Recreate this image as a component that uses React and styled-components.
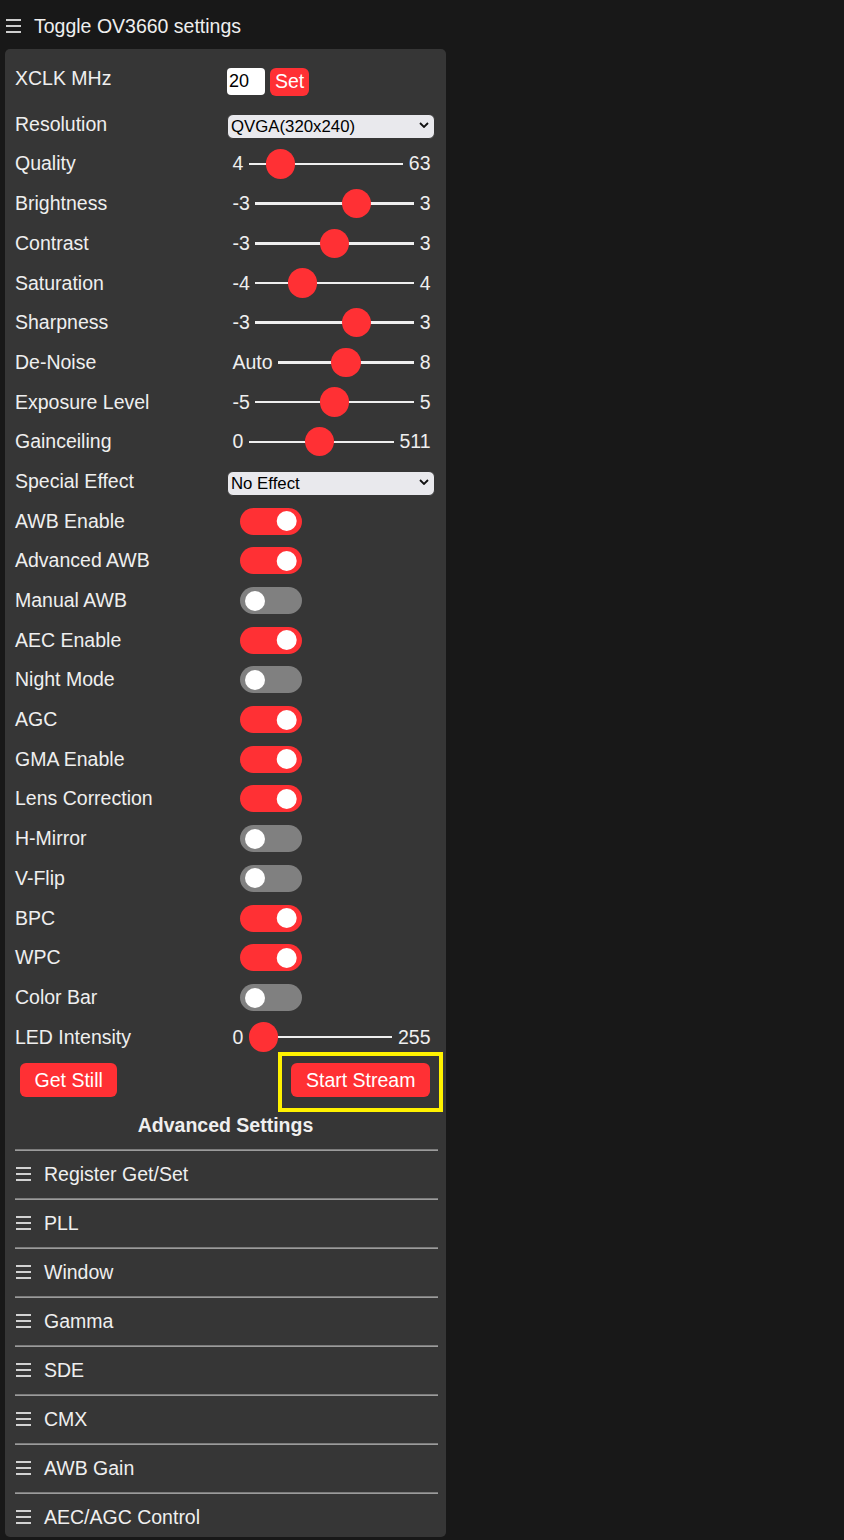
import styled, { createGlobalStyle } from 'styled-components'

const GlobalStyle = createGlobalStyle`
  html, body {
    margin: 0;
    padding: 0;
    background: #181818;
  }
  body {
    font-family: "Liberation Sans", Arial, Helvetica, sans-serif;
    font-size: 19.5px;
    color: #efefef;
    overflow: hidden;
  }
`

const Page = styled.div`
  min-height: 1540px;
`

const NavToggle = styled.label`
  display: flex;
  align-items: center;
  gap: 13px;
  height: 28px;
  line-height: 28px;
  padding: 12px 0 0 6px;
  margin-bottom: 9px;
  cursor: pointer;
`

const Menu = styled.nav`
  display: flex;
  flex-direction: column;
  width: 421px;
  margin-left: 5px;
  padding: 10px 10px 6px;
  background: #363636;
  border-radius: 5px;
`

const Group = styled.div`
  display: flex;
  flex-wrap: nowrap;
  line-height: 27px;
  margin: 6.35px 0;
`

const Label = styled.label`
  flex: 0 0 212px;
`

const TextInput = styled.input`
  box-sizing: border-box;
  width: 38px;
  height: 27px;
  margin: 3px 0 0;
  padding: 0 2px;
  border: 0;
  border-radius: 4px;
  background: #fff;
  color: #000;
  font-family: "Liberation Sans", Arial, sans-serif;
  font-size: 18px;
  outline: 0;
`

const InlineButton = styled.button`
  margin: 2.4px 2.4px 2.4px 5px;
  padding: 1.2px 4.9px 2.4px;
  border: 0;
  border-radius: 6px;
  background: #ff3034;
  color: #fff;
  font-family: "Liberation Sans", Arial, sans-serif;
  font-size: 19.5px;
  line-height: 24.4px;
  cursor: pointer;
`

const RangeEnd = styled.span`
  padding: 0 5.5px;
  white-space: nowrap;
`

const Range = styled.input.attrs({ type: 'range' })`
  -webkit-appearance: none;
  appearance: none;
  flex: 1 1 auto;
  min-width: 0;
  height: 27px;
  margin: 0;
  background: transparent;
  cursor: pointer;
  outline: 0;

  &::-webkit-slider-runnable-track {
    height: 2.5px;
    background: #efefef;
    border: 0;
  }
  &::-webkit-slider-thumb {
    -webkit-appearance: none;
    width: 29.3px;
    height: 29.3px;
    margin-top: -13.4px;
    border-radius: 50%;
    background: #ff3034;
    border: 0;
  }
`

const SelectBox = styled.div`
  position: relative;
  align-self: center;
  width: 208px;
  height: 25px;
`

const Select = styled.select`
  -webkit-appearance: none;
  appearance: none;
  box-sizing: border-box;
  width: 100%;
  height: 25px;
  margin: 0;
  padding: 0 0 0 3px;
  border: 1px solid #363636;
  border-radius: 6px;
  background: #e9e9ed;
  color: #000;
  font-family: "Liberation Sans", Arial, sans-serif;
  font-size: 16.8px;
  outline: 0;
`

const Chevron = styled.svg`
  position: absolute;
  right: 6px;
  top: 10px;
  pointer-events: none;
`

const Switch = styled.div`
  position: relative;
  height: 27px;
  margin-left: 13px;
`

const SwitchInput = styled.input.attrs({ type: 'checkbox' })`
  position: absolute;
  opacity: 0;
  width: 0;
  height: 0;
  margin: 0;
`

const SwitchTrack = styled.label`
  position: relative;
  display: block;
  width: 61.5px;
  height: 27px;
  border-radius: 27px;
  background: grey;
  cursor: pointer;

  &::before {
    content: "";
    position: absolute;
    left: 4.9px;
    top: 3.6px;
    width: 20px;
    height: 20px;
    border-radius: 50%;
    background: #fff;
  }

  ${SwitchInput}:checked + & {
    background: #ff3034;
  }
  ${SwitchInput}:checked + &::before {
    transform: translateX(31.7px);
  }
`

const Buttons = styled.section`
  display: flex;
  flex-wrap: nowrap;
  justify-content: space-between;
`

const Button = styled.button`
  position: relative;
  display: block;
  margin: 6px 5px;
  padding: 0 14.6px;
  border: 0;
  border-radius: 6px;
  background: #ff3034;
  color: #fff;
  font-family: "Liberation Sans", Arial, sans-serif;
  font-size: 19.5px;
  line-height: 34.5px;
  cursor: pointer;

  &:last-child {
    margin-right: 6px;
  }

  ${p => p.$marked && `
    &::after {
      content: "";
      position: absolute;
      left: -13.3px;
      right: -13px;
      top: -11px;
      bottom: -14.3px;
      border: 4px solid #fff200;
      pointer-events: none;
    }
  `}
`

const SectionTitle = styled.div`
  margin-top: 8.5px;
  line-height: 27px;
  text-align: center;
  font-weight: bold;
`

const Rule = styled.hr`
  margin: 10px -2px 10px 0;
  height: 0;
  border: 0;
  border-top: 1px solid #7c7c7c;
  border-bottom: 1px solid #9c9c9c;
`

const SectionLabel = styled.label`
  display: flex;
  align-items: center;
  gap: 13px;
  padding-left: 1px;
  line-height: 27px;
  cursor: pointer;
`

const Burger = () => (
  <svg width="15" height="14" viewBox="0 0 15 14">
    <g stroke="#efefef" strokeWidth="1.7">
      <line x1="0" y1="1" x2="15" y2="1" />
      <line x1="0" y1="7" x2="15" y2="7" />
      <line x1="0" y1="13" x2="15" y2="13" />
    </g>
  </svg>
)

const ranges = [
  { id: 'quality', label: 'Quality', min: 4, max: 63, value: 12 },
  { id: 'brightness', label: 'Brightness', min: -3, max: 3, value: 1 },
  { id: 'contrast', label: 'Contrast', min: -3, max: 3, value: 0 },
  { id: 'saturation', label: 'Saturation', min: -4, max: 4, value: -2 },
  { id: 'sharpness', label: 'Sharpness', min: -3, max: 3, value: 1 },
  { id: 'denoise', label: 'De-Noise', min: 0, max: 8, value: 4, minLabel: 'Auto' },
  { id: 'ae_level', label: 'Exposure Level', min: -5, max: 5, value: 0 },
  { id: 'gainceiling', label: 'Gainceiling', min: 0, max: 511, value: 248 },
]

const switches = [
  { id: 'awb', label: 'AWB Enable', on: true },
  { id: 'awb_gain', label: 'Advanced AWB', on: true },
  { id: 'manual_awb', label: 'Manual AWB', on: false },
  { id: 'aec', label: 'AEC Enable', on: true },
  { id: 'night', label: 'Night Mode', on: false },
  { id: 'agc', label: 'AGC', on: true },
  { id: 'raw_gma', label: 'GMA Enable', on: true },
  { id: 'lenc', label: 'Lens Correction', on: true },
  { id: 'hmirror', label: 'H-Mirror', on: false },
  { id: 'vflip', label: 'V-Flip', on: false },
  { id: 'bpc', label: 'BPC', on: true },
  { id: 'wpc', label: 'WPC', on: true },
  { id: 'colorbar', label: 'Color Bar', on: false },
]

const resolutions = [
  ['13', 'UXGA(1600x1200)'],
  ['12', 'SXGA(1280x1024)'],
  ['11', 'HD(1280x720)'],
  ['10', 'XGA(1024x768)'],
  ['9', 'SVGA(800x600)'],
  ['8', 'VGA(640x480)'],
  ['7', 'HVGA(480x320)'],
  ['6', 'CIF(400x296)'],
  ['5', 'QVGA(320x240)'],
  ['3', 'HQVGA(240x176)'],
  ['1', 'QQVGA(160x120)'],
]

const effects = ['No Effect', 'Negative', 'Grayscale', 'Red Tint', 'Green Tint', 'Blue Tint', 'Sepia']

const advanced = ['Register Get/Set', 'PLL', 'Window', 'Gamma', 'SDE', 'CMX', 'AWB Gain', 'AEC/AGC Control']

const SelectField = ({ id, value, children }) => (
  <SelectBox>
    <Select id={id} defaultValue={value}>{children}</Select>
    <Chevron width="10" height="6" viewBox="0 0 10 6">
      <path d="M1 1l4 4 4-4" fill="none" stroke="#111" strokeWidth="1.8" />
    </Chevron>
  </SelectBox>
)

const RangeRow = ({ id, label, min, max, value, minLabel }) => (
  <Group>
    <Label htmlFor={id}>{label}</Label>
    <RangeEnd>{minLabel ?? min}</RangeEnd>
    <Range id={id} min={min} max={max} defaultValue={value} />
    <RangeEnd>{max}</RangeEnd>
  </Group>
)

const SwitchRow = ({ id, label, on }) => (
  <Group>
    <Label htmlFor={id}>{label}</Label>
    <Switch>
      <SwitchInput id={id} defaultChecked={on} />
      <SwitchTrack htmlFor={id} />
    </Switch>
  </Group>
)

export default function App() {
  return (
    <Page>
      <GlobalStyle />
      <NavToggle>
        <Burger />
        Toggle OV3660 settings
      </NavToggle>
      <Menu>
        <Group>
          <Label htmlFor="xclk">XCLK MHz</Label>
          <TextInput id="xclk" defaultValue="20" maxLength={2} />
          <InlineButton>Set</InlineButton>
        </Group>
        <Group>
          <Label htmlFor="framesize">Resolution</Label>
          <SelectField id="framesize" value="5">
            {resolutions.map(([v, name]) => (
              <option key={v} value={v}>{name}</option>
            ))}
          </SelectField>
        </Group>
        {ranges.map(r => <RangeRow key={r.id} {...r} />)}
        <Group>
          <Label htmlFor="special_effect">Special Effect</Label>
          <SelectField id="special_effect" value="0">
            {effects.map((name, i) => (
              <option key={name} value={String(i)}>{name}</option>
            ))}
          </SelectField>
        </Group>
        {switches.map(s => <SwitchRow key={s.id} {...s} />)}
        <RangeRow id="led_intensity" label="LED Intensity" min={0} max={255} value={0} />
        <Buttons>
          <Button>Get Still</Button>
          <Button $marked>Start Stream</Button>
        </Buttons>
        <SectionTitle>Advanced Settings</SectionTitle>
        {advanced.map(name => (
          <div key={name}>
            <Rule />
            <SectionLabel>
              <Burger />
              {name}
            </SectionLabel>
          </div>
        ))}
      </Menu>
    </Page>
  )
}
